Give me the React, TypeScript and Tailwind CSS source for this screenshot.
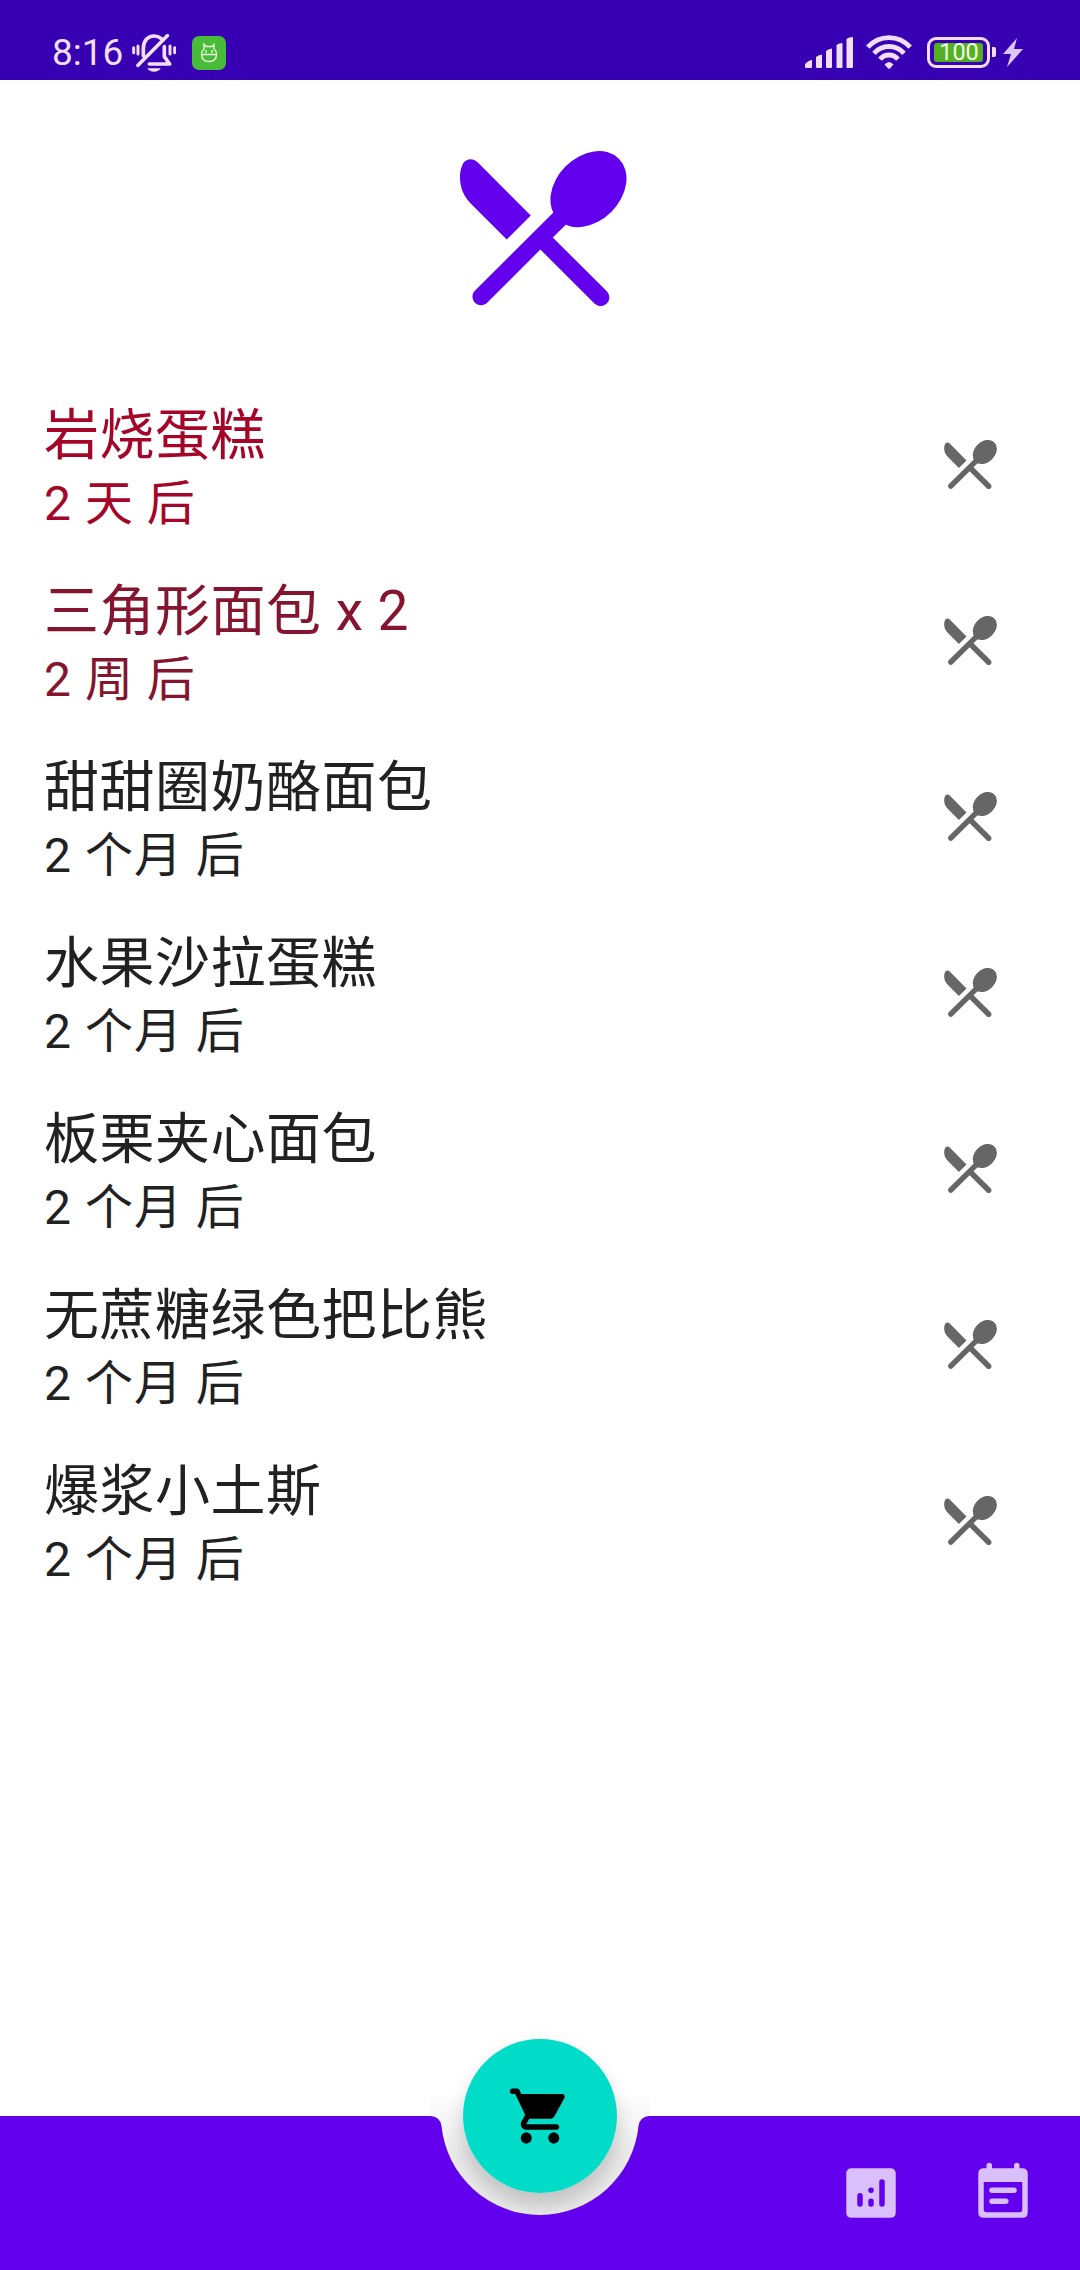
const items = [
  { name: '岩烧蛋糕', due: '2 天 后', tone: 'text-[#a50529]' },
  { name: '三角形面包 x 2', due: '2 周 后', tone: 'text-[#85142f]' },
  { name: '甜甜圈奶酪面包', due: '2 个月 后', tone: 'text-[#212121]' },
  { name: '水果沙拉蛋糕', due: '2 个月 后', tone: 'text-[#212121]' },
  { name: '板栗夹心面包', due: '2 个月 后', tone: 'text-[#212121]' },
  { name: '无蔗糖绿色把比熊', due: '2 个月 后', tone: 'text-[#212121]' },
  { name: '爆浆小土斯', due: '2 个月 后', tone: 'text-[#212121]' },
];

function Cutlery({ className }: { className: string }) {
  return (
    <svg viewBox="60 63 499 464" fill="currentColor" className={className}>
      <path d="M200 328 272 256 115 99C102 83 80 84 70 99C56 124 58 156 67 182C74 201 85 213 98 226Z" />
      <ellipse cx="445" cy="177" rx="129" ry="96.7" transform="rotate(-45 445 177)" />
      <path d="M340 247 103 483A26 26 0 0 0 139 520L301 358 463 520A26 26 0 0 0 500 483L338 322 377 284 420 220Z" />
    </svg>
  );
}

function MutedBell() {
  return (
    <svg viewBox="0 0 132 114" className="ml-[10px] h-[38px] w-[44px]" fill="none" stroke="#f1defa" strokeWidth="11" strokeLinecap="round">
      <path d="M34 66V44C34 20 48 6 66 6C76 6 82 9 88 14" />
      <path d="M97 38V68L113 90H52" strokeLinejoin="round" />
      <path d="M18 94 106 5" />
      <path d="M46 103H86C80 117 52 117 46 103Z" fill="#f1defa" stroke="none" />
      <path d="M5 41V56M18 36V60M114 36V60M128 41V56" strokeWidth="9" />
    </svg>
  );
}

function AppBadge() {
  return (
    <svg viewBox="0 0 34 34" className="ml-[16px] size-[34px]" fill="none" stroke="#eaffdf" strokeWidth="1.3">
      <rect width="34" height="34" rx="7" fill="#4abb39" stroke="none" />
      <path d="M12 8V13Q9.500 15 9.500 18Q9.500 25.500 17 25.500Q24.500 25.500 24.500 18Q24.500 15 22 13V8.500L20 10.500H14Z" />
      <path d="M9 18.500H25M14 14V17M20 14V17" />
    </svg>
  );
}

function StatusIcons() {
  return (
    <div className="mt-px flex items-center">
      <svg viewBox="0 0 48 31" className="mt-px h-[31px] w-[48px]" fill="#f1defa">
        <path d="M0 30V27Q4 23 7 23V30Q7 31 6 31H1Q0 31 0 30ZM11 20Q14 17.500 17 17.500V30Q17 31 16 31H12Q11 31 11 30ZM21 14Q24 11.500 27 11.500V30Q27 31 26 31H22Q21 31 21 30ZM31.500 8Q34 6 37.500 6V30Q37.500 31 36.500 31H32.500Q31.500 31 31.500 30ZM41.500 2Q44 0 48 0V30Q48 31 47 31H42.500Q41.500 31 41.500 30Z" />
      </svg>
      <svg viewBox="0 0 46 34" className="ml-[13px] h-[34px] w-[46px]" fill="none" stroke="#f1defa" strokeWidth="4.800">
        <path d="M1.800 12.200Q10.500 2.600 23 2.600Q35.500 2.600 44.200 12.200" />
        <path d="M8 18.300Q14 11.500 23 11.500Q32 11.500 38 18.300" />
        <path d="M14 24.300Q17.500 20 23 20Q28.500 20 32 24.300" />
        <path d="M18.500 29.500Q23 24.500 27.500 29.500L23.700 33.700H22.300Z" fill="#f1defa" stroke="none" />
      </svg>
      <div className="ml-[15px] flex h-[31px] w-[63px] items-center rounded-[9px] border-[3px] border-[#f1defa] pl-[4px]">
        <div className="flex h-[19px] w-[49px] items-center justify-center rounded-[3px] bg-[#54b022] pl-[1px] pt-[2px] text-[23.500px] leading-none text-[#f1ffe8]">100</div>
      </div>
      <div className="ml-[2px] h-[10px] w-[4px] rounded-r-[2px] bg-[#f1defa]" />
      <svg viewBox="0 0 20 29" className="ml-[7px] h-[29px] w-[20px]" fill="#dfc6fa">
        <path d="M14 0 0 16H8L4 29 20 11H11Z" />
      </svg>
    </div>
  );
}

function CartIcon() {
  return (
    <svg viewBox="0 0 24 24" className="size-[66px]" fill="black">
      <path d="M7 18c-1.100 0-1.990.9-1.990 2S5.900 22 7 22s2-.9 2-2-.9-2-2-2zM1 3c0 .55.45 1 1 1h1l3.600 7.590-1.350 2.440C4.520 15.370 5.480 17 7 17h11c.55 0 1-.45 1-1s-.45-1-1-1H7l1.100-2h7.450c.75 0 1.410-.41 1.750-1.030l3.580-6.490c.37-.66-.11-1.480-.87-1.480H5.210l-.67-1.430c-.16-.35-.52-.57-.9-.57H2c-.55 0-1 .45-1 1zm16 15c-1.100 0-1.990.9-1.990 2s.89 2 1.990 2 2-.9 2-2-.9-2-2-2z" />
    </svg>
  );
}

function BottomBar() {
  return (
    <footer className="relative mt-auto h-[154px]">
      {/* cradle shade and button shadow sit below the bar, so only the part inside the cradle shows */}
      <div className="absolute left-[430px] top-[-24px] h-[130px] w-[220px] bg-linear-to-b from-white to-[#eaeaea] to-50%" />
      <div className="absolute left-[463px] top-[-77px] size-[154px] rounded-full shadow-[0_4px_24px_rgba(0,0,0,0.06),0_14px_18px_rgba(0,0,0,0.13)]" />
      <svg viewBox="0 0 1080 154" className="absolute inset-0 h-[154px] w-[1080px]" fill="#6200ee">
        <path d="M0 0H430.600A11 11 0 0 1 441.500 9.900A99 99 0 0 0 638.500 9.900A11 11 0 0 1 649.400 0H1080V154H0Z" />
      </svg>
      <button className="absolute left-[463px] top-[-77px] flex size-[154px] items-center justify-center rounded-full bg-[#00dcc8]">
        <CartIcon />
      </button>
      <nav className="relative flex items-center justify-end gap-[66px] pr-[44.500px] pt-[43.500px] text-[#d9bffc]">
        <svg viewBox="0 0 24 24" className="size-[66px]">
          <path fill="currentColor" fillRule="evenodd" d="M5 3H19Q21 3 21 5V19Q21 21 19 21H5Q3 21 3 19V5Q3 3 5 3ZM7 13V16A1 1 0 0 0 9 16V13A1 1 0 0 0 7 13ZM11 11A1 1 0 0 0 13 11A1 1 0 0 0 11 11ZM11 15V16A1 1 0 0 0 13 16V15A1 1 0 0 0 11 15ZM15 8V16A1 1 0 0 0 17 16V8A1 1 0 0 0 15 8Z" />
        </svg>
        <svg viewBox="0 0 24 24" className="size-[66px]" fill="currentColor">
          <path fillRule="evenodd" d="M6 3V2A1 1 0 0 1 8 2V3H16V2A1 1 0 0 1 18 2V3H19Q21 3 21 5V19Q21 21 19 21H5Q3 21 3 19V5Q3 3 5 3ZM5 8V18Q5 19 6 19H18Q19 19 19 18V8Z" />
          <rect x="7" y="10" width="10" height="2" rx="1" />
          <rect x="7" y="14" width="7" height="2" rx="1" />
        </svg>
      </nav>
    </footer>
  );
}

export default function App() {
  return (
    <div className="flex h-[2270px] w-[1080px] flex-col overflow-hidden bg-white font-[Roboto,'Noto_Sans_CJK_SC',sans-serif]">
      <header className="flex h-[80px] items-start justify-between bg-[#3700b3] pl-[52px] pr-[57px] pt-[34px]">
        <div className="flex items-center">
          <span className="w-[70px] whitespace-nowrap text-[37px] leading-[38px] text-[#f1defa]">8:16</span>
          <MutedBell />
          <AppBadge />
        </div>
        <StatusIcons />
      </header>
      <Cutlery className="ml-[460px] mt-[71px] h-[155px] w-[166.500px] shrink-0 text-[#6200ee]" />
      <ul className="mt-[72px]">
        {items.map((item) => (
          <li key={item.name} className="flex h-[176px] items-start justify-between pl-[44px] pr-[83px]">
            <div className={item.tone}>
              <div className="pt-[21px] text-[55px] leading-[72px] tracking-[0.5px]">{item.name}</div>
              <div className="pt-px text-[48px] leading-[64px] tracking-[1px]">{item.due}</div>
            </div>
            <Cutlery className="mt-[62px] h-[49px] w-[53px] text-[#666666]" />
          </li>
        ))}
      </ul>
      <BottomBar />
    </div>
  );
}
